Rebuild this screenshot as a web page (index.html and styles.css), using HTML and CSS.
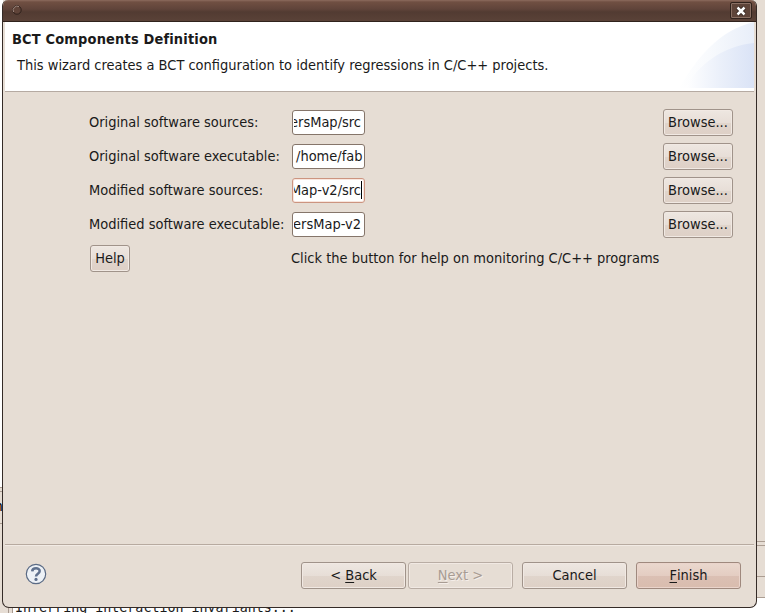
FILE: index.html
```html
<!DOCTYPE html>
<html lang="en">
<head>
<meta charset="utf-8">
<title>BCT Components Definition</title>
<link rel="stylesheet" href="styles.css">
</head>
<body>
<div class="desktop">
  <div class="backdrop">
    <div class="edge-left"><span class="edge-char">n</span></div>
    <div class="edge-right"></div>
    <div class="console"><span>Inferring interaction invariants...</span></div>
  </div>
  <main class="window">
    <div class="titlebar">
      <svg class="menu-dot" width="12" height="12" viewBox="0 0 12 12"><circle cx="6" cy="6" r="4.2" fill="#604439" stroke="#2f211c"/><path d="M2.6 8A4 4 0 0 1 8 2.6" fill="none" stroke="#b19a90" stroke-width=".8"/></svg>
      <div class="close"><svg width="10" height="10" viewBox="0 0 10 10"><path d="M1.5 1.5L8.5 8.5M8.5 1.5L1.5 8.5" stroke="#2a1c17" stroke-width="4"/><path d="M1.5 1.5L8.5 8.5M8.5 1.5L1.5 8.5" stroke="#fff" stroke-width="2.5"/></svg></div>
    </div>
    <header class="banner">
      <div class="banner-text">
        <h1>BCT Components Definition</h1>
        <p>This wizard creates a BCT configuration to identify regressions in C/C++ projects.</p>
      </div>
      <svg class="swoosh" width="75" height="66" viewBox="0 0 75 66">
        <defs>
          <linearGradient id="a" x1="0" x2="1"><stop offset="0" stop-color="#fff"/><stop offset=".4" stop-color="#f8fafd"/><stop offset="1" stop-color="#e8eef9"/></linearGradient>
          <linearGradient id="b" x1="0" x2="1"><stop offset="0" stop-color="#fff"/><stop offset=".5" stop-color="#ebf0fa"/><stop offset="1" stop-color="#dae3f6"/></linearGradient>
        </defs>
        <path d="M0 66C18 36 40 8 75 0V66Z" fill="url(#a)"/>
        <path d="M6 66C20 42 44 24 75 21V66Z" fill="url(#b)"/>
      </svg>
    </header>
    <section class="form">
      <label>Original software sources:</label><div class="field"><span>ersMap/src</span></div><div class="button browse">Browse...</div>
      <label>Original software executable:</label><div class="field start"><span>/home/fab</span></div><div class="button browse">Browse...</div>
      <label>Modified software sources:</label><div class="field focused"><span>Map-v2/src</span></div><div class="button browse">Browse...</div>
      <label>Modified software executable:</label><div class="field"><span>ersMap-v2</span></div><div class="button browse">Browse...</div>
      <div class="button help">Help</div><div class="hint">Click the button for help on monitoring C/C++ programs</div>
    </section>
    <footer class="actions">
      <svg class="help-icon" width="22" height="22" viewBox="0 0 22 22"><circle cx="11" cy="11" r="9.7" fill="#edf1f6" stroke="#5b6b85" stroke-width="1.2"/><path d="M7.2 8.3C7.5 4.3 14.7 4.4 14.7 8.1C14.7 10.8 11 10.7 11 13.6" fill="none" stroke="#60718e" stroke-width="2.5"/><circle cx="11" cy="16.4" r="1.6" fill="#60718e"/></svg>
      <div class="button wide">&lt; <u>B</u>ack</div>
      <div class="button wide disabled"><u>N</u>ext &gt;</div>
      <div class="button wide cancel">Cancel</div>
      <div class="button wide finish"><u>F</u>inish</div>
    </footer>
  </main>
</div>
</body>
</html>
```

FILE: styles.css
```css
* { box-sizing: border-box; }
body { margin: 0; font: 14.47px/18px "DejaVu Sans Condensed", "DejaVu Sans", sans-serif; font-stretch: condensed; color: #1a1a1a; }
.desktop { position: relative; width: 765px; height: 613px; overflow: hidden; background: #e6ddd4; padding-left: 2px; }
.backdrop { position: absolute; inset: 0; }
.edge-left { position: absolute; left: 0; top: 0; width: 3px; height: 524px; overflow: hidden; background: linear-gradient(#fff 0 487px, #a89a90 487px 488px, #e6ddd4 488px 491px, #a89a90 491px 492px, #e6ddd4 492px 523px, #a89a90 523px); }
.edge-char { position: absolute; right: 0; top: 497px; font: 14px/18px "DejaVu Sans Mono", monospace; color: #000; }
.edge-right { position: absolute; left: 756px; right: 0; top: 0; bottom: 0; background: linear-gradient(#e6ddd4 0 541px, #ab9d92 541px 542px, #e6ddd4 542px 545px, #ab9d92 545px 546px, #e6ddd4 546px 576px, #ab9d92 576px 577px, #e6ddd4 577px 597px, #ab9d92 597px 598px, #fff 598px); }
.console { position: absolute; left: 8px; right: 0; top: 600px; height: 13px; overflow: hidden; border-left: 1px solid #a89a90; padding-left: 3px; }
.console span { display: block; height: 16px; padding-left: 2px; border-left: 1px solid #a89a90; background: #fff; font: 13.33px/16px "DejaVu Sans Mono", monospace; }
.window { position: relative; width: 755px; height: 608px; display: flex; flex-direction: column; border: 1px solid #352b27; border-top: 0; border-radius: 6px 6px 7px 7px; overflow: hidden; background: #e6ddd4; }
.titlebar { flex: 0 0 22px; display: flex; justify-content: space-between; align-items: flex-start; padding: 2px 4px 0 8px; background: linear-gradient(#8c6b5d 0, #704f42 2px, #60443a 9px, #523b32 12px, #594137 20px); border-bottom: 1px solid #30221c; }
.menu-dot { margin-top: 2px; }
.close { width: 22px; height: 17px; border: 1px solid #30221c; border-radius: 2px; box-shadow: inset 0 0 0 1px #8a7064; background: #5e4439; display: flex; align-items: center; justify-content: center; }
.banner { flex: 0 0 70px; margin: 0 2px; display: flex; justify-content: space-between; background: #fff; border-bottom: 1px solid #b5aaa2; }
.banner-text { padding: 8px 0 0 7px; }
h1 { margin: 0; font-size: 14.47px; line-height: 18px; font-weight: bold; letter-spacing: .16px; }
.banner p { margin: 8px 0 0 5px; white-space: nowrap; }
.form { flex: 1; display: grid; grid-template-columns: 202px 372px 70px; grid-auto-rows: 28px; row-gap: 6px; align-content: start; align-items: center; padding: 16px 0 0 86px; }
.field { width: 73px; height: 25px; border: 1px solid #85756a; border-radius: 3px; background: #fff; margin-left: 1px; padding: 2px 0 0 1px; }
.field span { display: flex; justify-content: flex-end; overflow: hidden; padding-right: 3px; white-space: nowrap; }
.field.start span { justify-content: flex-start; padding: 0 0 0 2px; }
.field.focused { border-color: #cc9480; box-shadow: inset 0 0 0 1px #f8e6de; }
.field.focused span { border-right: 1px solid #000; margin-right: 2px; padding-right: 0; }
.button { height: 27px; display: flex; align-items: center; justify-content: center; border: 1px solid #a0938a; border-radius: 3px; box-shadow: inset 0 0 0 1px #f1e9e3; background: linear-gradient(#eee7e1, #e7ded7 50%, #e0d5cc 51%, #ded0c6); white-space: pre; }
.browse { width: 70px; }
.help { width: 40px; margin-left: 1px; }
.hint { white-space: nowrap; }
.actions { flex: 0 0 63px; display: flex; align-items: flex-start; margin: 0 2px; padding: 17px 13px 0 20px; border-top: 1px solid #b7aaa0; box-shadow: inset 0 1px #f2ebe5; }
.help-icon { margin: 1px auto 0 0; }
.wide { width: 105px; margin-left: 2px; padding-bottom: 1px; }
.cancel, .finish { margin-left: 9px; }
.disabled { color: #a89c93; border-color: #b9ada4; background: #e6ddd4; text-shadow: 1px 1px #f5eee9; }
.finish { border-color: #9f897e; box-shadow: inset 0 0 0 1px #ead4cb; background: linear-gradient(#ead8ce, #e4cdc2 50%, #dbc0b4 51%, #d9bcae); }
u { text-underline-offset: 2px; }
```
